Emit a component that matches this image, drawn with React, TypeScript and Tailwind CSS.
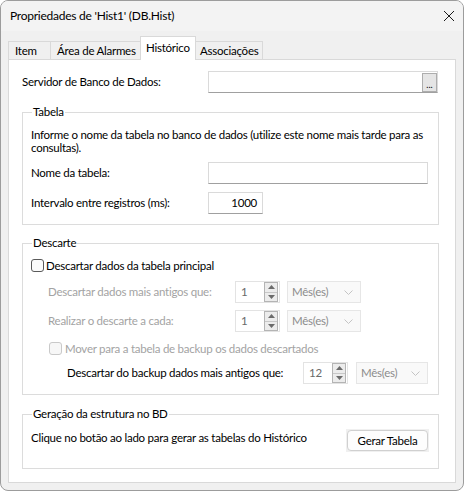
import React from "react";

const font = "font-['Segoe_UI',Lato,Roboto,sans-serif]";

function SpinArrows() {
  return (
    <div className="flex h-full w-[14px] flex-col border border-[#b4b4b4] bg-[#ececec]">
      <div className="flex flex-1 items-center justify-center border-b border-[#c8c8c8]">
        <svg width="7" height="4" viewBox="0 0 7 4">
          <polygon points="3.5,0 7,4 0,4" fill="#6b6b6b" />
        </svg>
      </div>
      <div className="flex flex-1 items-center justify-center">
        <svg width="7" height="4" viewBox="0 0 7 4">
          <polygon points="0,0 7,0 3.5,4" fill="#6b6b6b" />
        </svg>
      </div>
    </div>
  );
}

function SpinBox({ value, width }: { value: string; width: string }) {
  return (
    <div className={`flex h-[22px] items-stretch border border-[#e3e3e3] bg-white pr-[1px] ${width}`}>
      <span className="flex flex-1 items-center pl-[5px] text-[#6a6a6a]">{value}</span>
      <SpinArrows />
    </div>
  );
}

function Combo({ width }: { width: string }) {
  return (
    <div className={`flex h-[22px] items-center justify-between border border-[#e6e6e6] bg-[#f9f9f9] pl-[4px] pr-[7px] text-[#8c8c8c] ${width}`}>
      <span>Mês(es)</span>
      <svg width="9" height="5" viewBox="0 0 9 5">
        <polyline points="0.5,0.5 4.5,4.5 8.5,0.5" fill="none" stroke="#c4c4c4" strokeWidth="1" />
      </svg>
    </div>
  );
}

function CheckBox({ disabled }: { disabled?: boolean }) {
  return (
    <span
      className={`block h-[13px] w-[13px] shrink-0 rounded-[3px] border ${
        disabled ? "border-[#c9c9c9] bg-[#f7f7f7]" : "border-[#5a5a5a] bg-[#fbfbfb]"
      }`}
    />
  );
}

function Group({ title, className, children }: { title: string; className?: string; children: React.ReactNode }) {
  return (
    <fieldset className={`ml-[13px] w-[417px] border border-[#dcdcdc] px-[8px] ${className ?? ""}`}>
      <legend className="ml-[1px] px-[1px] leading-[14px] text-black">{title}</legend>
      {children}
    </fieldset>
  );
}

export default function App() {
  return (
    <div className={`h-[491px] w-[465px] whitespace-nowrap bg-white text-[11.5px] tracking-[-0.25px] text-black ${font}`}>
      <div className="flex h-[491px] w-[464px] flex-col overflow-hidden rounded-[8px] border border-[#9c9c9c] bg-[#f0f0f0]">
        {/* title bar */}
        <div className="flex h-[30px] shrink-0 items-center justify-between bg-[#f3f3f3] pl-[9px] pr-[7px]">
          <span className="text-[12px] leading-none">Propriedades de 'Hist1' (DB.Hist)</span>
          <svg width="12" height="12" viewBox="0 0 12 12" className="mr-[1px]">
            <path d="M1 1 L11 11 M11 1 L1 11" stroke="#1b1b1b" strokeWidth="1" />
          </svg>
        </div>

        {/* tabs */}
        <div className="flex h-[28px] shrink-0 items-end pl-[7px]">
          <div className="h-[18px] w-[42px] border-l border-t border-[#d9d9d9] pl-[6px] leading-[18px]">Item</div>
          <div className="h-[18px] w-[90px] border-l border-t border-[#d9d9d9] pl-[6px] leading-[18px]">Área de Alarmes</div>
          <div className="relative z-10 -mb-px h-[24px] w-[56px] border-x border-t border-[#d9d9d9] bg-white pl-[5px] pt-[2px] leading-[18px]">
            Histórico
          </div>
          <div className="h-[18px] w-[67px] border-r border-t border-[#d9d9d9] pl-[4px] leading-[18px]">Associações</div>
        </div>

        {/* panel */}
        <div className="ml-[7px] h-[424px] w-[448px] shrink-0 border border-[#d9d9d9] bg-white">
          <div className="mt-[11px] flex h-[22px] items-center pl-[13px]">
            <span className="w-[186px]">Servidor de Banco de Dados:</span>
            <div className="flex h-[22px] w-[230px] justify-end border border-[#dadada] border-b-[#a0a0a0] bg-white">
              <div className="mt-[1px] flex h-[19px] w-[15px] items-end justify-center border border-[#adadad] bg-[#e5e5e5] pb-[2px] text-[9px] leading-none tracking-normal">
                ...
              </div>
            </div>
          </div>

          <Group title="Tabela" className="mt-[12px] pb-[10px]">
            <p className="mt-[9px] leading-[13px]">
              Informe o nome da tabela no banco de dados (utilize este nome mais tarde para as
              <br />
              consultas).
            </p>
            <div className="mt-[8px] flex h-[22px] items-center">
              <span className="w-[177px]">Nome da tabela:</span>
              <div className="h-[22px] w-[220px] border border-[#dadada] border-b-[#a0a0a0] bg-white" />
            </div>
            <div className="mt-[8px] flex h-[22px] items-center">
              <span className="w-[177px]">Intervalo entre registros (ms):</span>
              <div className="flex h-[22px] w-[55px] items-center justify-end border border-[#dadada] border-b-[#a0a0a0] bg-white pr-[5px]">
                1000
              </div>
            </div>
          </Group>

          <Group title="Descarte" className="mt-[11px] pb-[10px]">
            <div className="mt-[9px] flex items-center gap-[2px]">
              <CheckBox />
              <span className="leading-[13px]">Descartar dados da tabela principal</span>
            </div>
            <div className="mt-[9px] flex h-[22px] items-center pl-[17px]">
              <span className="w-[187px] text-[#a3a3a3]">Descartar dados mais antigos que:</span>
              <SpinBox value="1" width="w-[45px]" />
              <div className="w-[7px]" />
              <Combo width="w-[74px]" />
            </div>
            <div className="mt-[7px] flex h-[22px] items-center pl-[17px]">
              <span className="w-[187px] text-[#a3a3a3]">Realizar o descarte a cada:</span>
              <SpinBox value="1" width="w-[45px]" />
              <div className="w-[7px]" />
              <Combo width="w-[74px]" />
            </div>
            <div className="mt-[10px] flex items-center gap-[3px] pl-[18px]">
              <CheckBox disabled />
              <span className="leading-[13px] text-[#a3a3a3]">Mover para a tabela de backup os dados descartados</span>
            </div>
            <div className="mt-[7px] flex h-[22px] items-center pl-[36px]">
              <span className="w-[236px]">Descartar do backup dados mais antigos que:</span>
              <SpinBox value="12" width="w-[45px]" />
              <div className="w-[8px]" />
              <Combo width="w-[72px]" />
            </div>
          </Group>

          <Group title="Geração da estrutura no BD" className="mt-[12px] pb-[16px]">
            <div className="mt-[8px] flex items-start justify-between pr-[1px]">
              <span className="mt-[1px] leading-[15px]">Clique no botão ao lado para gerar as tabelas do Histórico</span>
              <div className="bg-[#f0f0f0] p-[1px]">
                <div className="flex h-[21px] w-[81px] items-center justify-center rounded-[4px] border border-[#d0d0d0] bg-[#fdfdfd]">
                  Gerar Tabela
                </div>
              </div>
            </div>
          </Group>
        </div>
      </div>
    </div>
  );
}
